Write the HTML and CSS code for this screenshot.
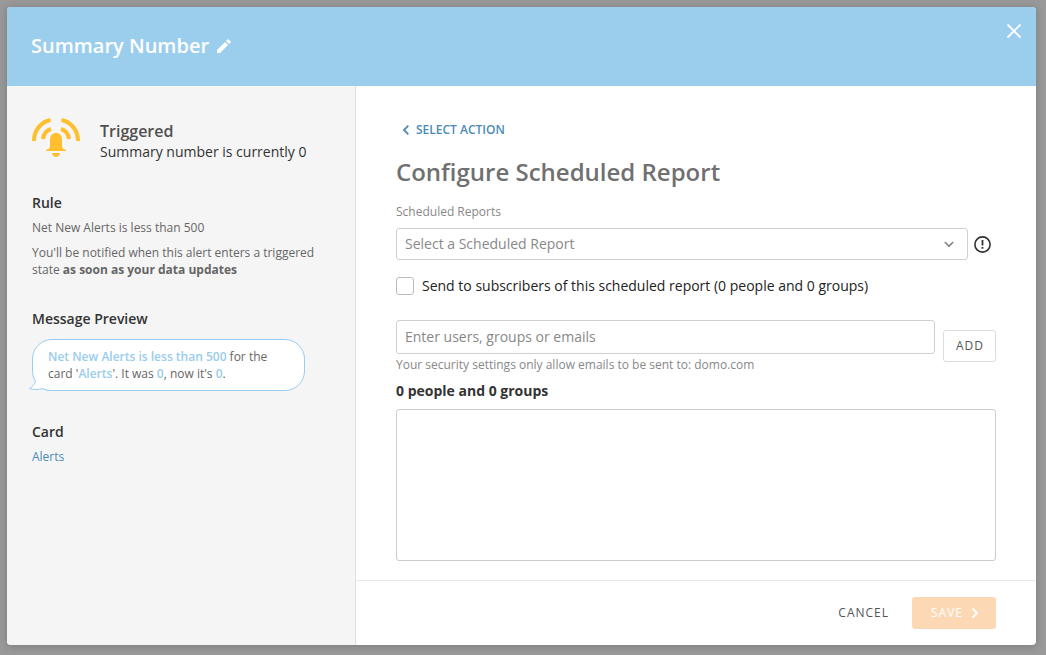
FILE: index.html
```html
<!DOCTYPE html>
<html lang="en">
<head>
<meta charset="utf-8">
<title>Configure Scheduled Report</title>
<meta name="viewport" content="width=device-width, initial-scale=1">
<link rel="stylesheet" href="styles.css">
</head>
<body>
<div class="modal" role="dialog" aria-labelledby="modal-title">
  <header class="modal-header">
    <h1 class="modal-title" id="modal-title">Summary Number</h1>
    <button class="icon-button edit" type="button" aria-label="Edit name">
      <svg width="16" height="16" viewBox="0 0 16 16"><path fill="#fff" d="M1 12v3h3l8-8-3-3zM10 3l3 3 1.600-1.600a.8.8 0 0 0 0-1.100l-1.900-1.900a.8.8 0 0 0-1.100 0z"/></svg>
    </button>
    <button class="icon-button close" type="button" aria-label="Close">
      <svg width="16" height="16" viewBox="0 0 16 16"><path fill="none" stroke="#fff" stroke-width="1.800" d="M1.500 1.500l13 13M14.500 1.500l-13 13"/></svg>
    </button>
  </header>

  <div class="modal-body">
    <aside class="sidebar">
      <div class="status">
        <svg class="status-icon" width="48" height="40" viewBox="0 0 48 40">
          <g fill="none" stroke="#ffbf2e" stroke-width="4">
            <path d="M2 23C2 12 9 4 18.500 2M46 23C46 12 39 4 29.500 2"/>
            <path d="M11 21c.5-5 3.500-8.500 8-10M37 21c-.5-5-3.500-8.500-8-10"/>
          </g>
          <path fill="#ffbf2e" d="M24 15c-3.800 0-6 2.700-6 6.500v7c0 1.500-1.200 2.500-4 3.500v1h20v-1c-2.800-1-4-2-4-3.500v-7c0-3.800-2.200-6.500-6-6.500zM20 35h8c-.5 2.500-2 4-4 4s-3.500-1.500-4-4z"/>
        </svg>
        <div>
          <p class="status-title">Triggered</p>
          <p class="status-text">Summary number is currently 0</p>
        </div>
      </div>

      <section class="section">
        <h2 class="section-title">Rule</h2>
        <p class="section-text">Net New Alerts is less than 500</p>
        <p class="section-text">You'll be notified when this alert enters a triggered state <strong>as soon as your data updates</strong></p>
      </section>

      <section class="section">
        <h2 class="section-title">Message Preview</h2>
        <div class="bubble">
          <p class="bubble-text"><span class="highlight">Net New Alerts is less than 500</span> for the card '<span class="highlight">Alerts</span>'. It was <span class="highlight">0</span>, now it's <span class="highlight">0</span>.</p>
          <svg class="bubble-tail" width="20" height="12" viewBox="0 0 20 12"><path fill="#fff" d="M6 0C5 2.500 3 4.500.6 6.600c4 1.400 9 1 13.400.1l5 1.300V0z"/><path fill="none" stroke="#99ccee" d="M6.200 0C5.800 2.500 3 4.500.6 6.600c4 1.400 9 1 13.400.1 1.500.9 3 1.600 6 1.800"/></svg>
        </div>
      </section>

      <section class="section">
        <h2 class="section-title">Card</h2>
        <a class="card-link" href="#alerts">Alerts</a>
      </section>
    </aside>

    <main class="main">
      <div class="content">
        <a class="back" href="#actions">
          <svg width="8" height="10" viewBox="0 0 8 10"><path fill="none" stroke="#4b8bb5" stroke-width="1.800" d="M6.300.7L2 5l4.300 4.300"/></svg>
          SELECT ACTION
        </a>
        <h2 class="heading">Configure Scheduled Report</h2>

        <label class="field-label" for="report">Scheduled Reports</label>
        <div class="select-row">
          <div class="select-box">
            <select class="control select" id="report"><option>Select a Scheduled Report</option></select>
            <svg class="select-arrow" width="10" height="7" viewBox="0 0 10 7"><path fill="none" stroke="#888" stroke-width="1.700" d="M.8 1L5 5.200 9.200 1"/></svg>
          </div>
          <svg class="warning" width="17" height="17" viewBox="0 0 17 17" role="img" aria-label="Required"><circle cx="8.500" cy="8.500" r="7.600" fill="none" stroke="#333" stroke-width="1.600"/><path fill="#333" d="M7.600 4h1.800v5.500H7.600zM7.600 11h1.800v1.800H7.600z"/></svg>
        </div>

        <div class="check-row">
          <input class="checkbox" type="checkbox" id="subscribers">
          <label for="subscribers">Send to subscribers of this scheduled report (0 people and 0 groups)</label>
        </div>

        <div class="recipient-row">
          <div class="recipient">
            <input class="control recipient-input" type="text" placeholder="Enter users, groups or emails" aria-label="Users, groups or emails" aria-describedby="hint">
            <p class="hint" id="hint">Your security settings only allow emails to be sent to: domo.com</p>
          </div>
          <button class="button add" type="button">ADD</button>
        </div>

        <h3 class="count">0 people and 0 groups</h3>
        <div class="recipient-list"></div>
      </div>

      <footer class="footer">
        <button class="button cancel" type="button">CANCEL</button>
        <button class="button save" type="button" disabled>SAVE
          <svg width="8" height="12" viewBox="0 0 8 12"><path fill="none" stroke="#fff" stroke-width="2" d="M1.500 1.500L6 6l-4.500 4.500"/></svg>
        </button>
      </footer>
    </main>
  </div>
</div>
</body>
</html>
```

FILE: styles.css
```css
* {
  box-sizing: border-box;
}

body {
  display: flex;
  min-height: 100vh;
  margin: 0;
  padding: 7px 10px 10px 7px;
  background: #999;
  color: #333;
  font-family: "Open Sans", "Noto Sans", sans-serif;
  font-size: 14px;
  line-height: 20px;
}

h1, h2, h3, p {
  margin: 0;
}

a {
  text-decoration: none;
}

svg {
  display: block;
  flex: none;
}

button, input, select {
  margin: 0;
  font: inherit;
}

.modal {
  display: flex;
  flex: 1;
  flex-direction: column;
  overflow: hidden;
  border-radius: 4px;
  background: #fff;
  box-shadow: 0 1px 8px rgba(0, 0, 0, 0.2);
}

.modal-header {
  display: flex;
  align-items: center;
  gap: 7px;
  height: 79px;
  padding: 0 14px 2px 24px;
  background: #9bcded;
}

.modal-title {
  color: #fff;
  font-size: 20px;
  font-weight: 600;
  line-height: 28px;
}

.icon-button {
  padding: 0;
  border: 0;
  background: none;
}

.close {
  align-self: flex-start;
  margin: 16px 0 0 auto;
}

.modal-body {
  display: flex;
  flex: 1;
}

.sidebar {
  flex: none;
  width: 349px;
  padding: 32px 24px 32px 25px;
  border-right: 1px solid #ddd;
  background: #f5f5f5;
}

.status {
  display: flex;
  gap: 20px;
}

.status-title {
  margin-top: 2px;
  color: #505050;
  font-size: 16px;
  font-weight: 600;
  line-height: 22px;
}

.section {
  margin-top: 31px;
}

.section-title {
  margin-bottom: 6px;
  font-size: 14px;
  font-weight: 600;
  line-height: 20px;
}

.section-text {
  margin-bottom: 8px;
  color: #666;
  font-size: 12px;
  line-height: 17px;
}

.bubble {
  position: relative;
  width: 273px;
  margin-top: 10px;
  padding: 8px 24px 8px 15px;
  border: 1px solid #9ce;
  border-radius: 20px;
  background: #fff;
}

.bubble-text {
  color: #666;
  font-size: 12px;
  line-height: 17px;
}

.bubble-tail {
  position: absolute;
  bottom: -4px;
  left: -4px;
}

.highlight {
  color: #9ce;
  font-weight: 600;
}

.card-link {
  display: block;
  color: #4b8bb5;
  font-size: 12px;
  line-height: 17px;
}

.main {
  display: flex;
  flex: 1;
  flex-direction: column;
  min-width: 0;
}

.content {
  display: flex;
  flex: 1;
  flex-direction: column;
  padding: 35px 40px 19px;
}

.back {
  display: flex;
  align-items: center;
  align-self: flex-start;
  gap: 6px;
  padding-left: 6px;
  color: #4b8bb5;
  font-size: 12px;
  font-weight: 600;
  line-height: 18px;
}

.heading {
  margin-top: 17px;
  color: #707070;
  font-size: 24px;
  font-weight: 600;
  line-height: 32px;
}

.field-label {
  margin: 16px 0 8px;
  color: #888;
  font-size: 12px;
  line-height: 16px;
}

.select-row {
  display: flex;
  align-items: center;
  gap: 6px;
  padding-right: 5px;
}

.select-box {
  position: relative;
  flex: 1;
}

.control {
  display: block;
  width: 100%;
  padding: 0 8px;
  border: 1px solid #d0d0d0;
  border-radius: 3px;
  background: #fff;
  color: #888;
}

.control::placeholder {
  color: #888;
  opacity: 1;
}

.select {
  height: 32px;
  appearance: none;
}

.select-arrow {
  position: absolute;
  top: 13px;
  right: 14px;
  pointer-events: none;
}

.check-row {
  display: flex;
  align-items: center;
  gap: 8px;
  margin-top: 16px;
  color: #222;
}

.checkbox {
  width: 18px;
  height: 18px;
  border: 1px solid #bbb;
  border-radius: 3px;
  background: #fff;
  appearance: none;
}

.recipient-row {
  display: flex;
  align-items: flex-start;
  gap: 8px;
  margin-top: 24px;
}

.recipient {
  flex: 1;
}

.recipient-input {
  height: 34px;
  padding-bottom: 2px;
}

.hint {
  margin-top: 2px;
  color: #888;
  font-size: 12px;
  line-height: 18px;
}

.button {
  display: flex;
  align-items: center;
  justify-content: center;
  height: 32px;
  border: 0;
  border-radius: 3px;
  background: #fff;
  color: #555;
  font-size: 12px;
  letter-spacing: 1px;
}

.add {
  margin-top: 10px;
  padding: 0 11px 0 12px;
  border: 1px solid #ddd;
}

.count {
  margin: 7px 0 8px;
  font-size: 14px;
  font-weight: 700;
}

.recipient-list {
  flex: 1;
  min-height: 80px;
  border: 1px solid #ccc;
  border-radius: 3px;
}

.footer {
  display: flex;
  justify-content: flex-end;
  padding: 16px 40px;
  border-top: 1px solid #e8e8e8;
}

.cancel {
  padding: 0 23px;
}

.save {
  gap: 8px;
  padding: 0 17px 0 19px;
  background: #fdd8b5;
  color: #fff;
}
```
